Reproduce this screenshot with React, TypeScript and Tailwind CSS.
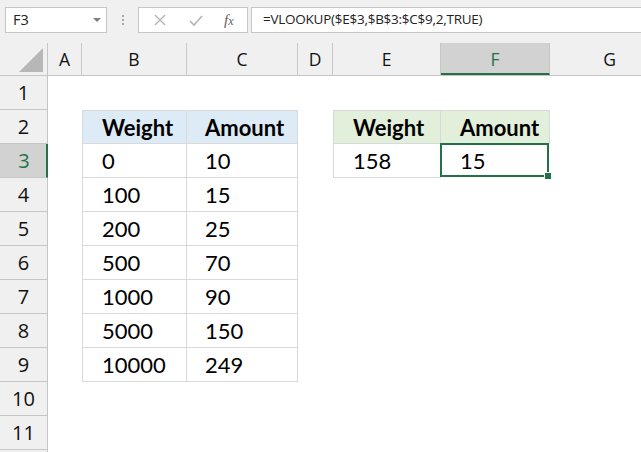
import React from "react";

const cols = [34, 105, 111, 35, 108, 109, 120];
const colLetters = ["A", "B", "C", "D", "E", "F", "G"];

const t1 = [
  ["0", "10"],
  ["100", "15"],
  ["200", "25"],
  ["500", "70"],
  ["1000", "90"],
  ["5000", "150"],
  ["10000", "249"],
];

function Cell({ w, className = "", children }: { w: number; className?: string; children?: React.ReactNode }) {
  return (
    <div className={"h-full shrink-0 flex items-center " + className} style={{ width: w }}>
      {children}
    </div>
  );
}

const lato = { fontFamily: "Lato, sans-serif" };

export default function App() {
  const rows = Array.from({ length: 11 }, (_, i) => i + 1);
  return (
    <div className="w-[641px] h-[452px] overflow-hidden bg-white relative" style={{ fontFamily: "'Open Sans', sans-serif" }}>
      {/* formula bar */}
      <div className="h-[43px] bg-[#f0f0f0] flex items-start pt-[7px] pl-[5px]">
        <div className="w-[102px] h-[26px] bg-white border border-[#c6c6c6] flex items-center justify-between pl-[7px] pr-[5px]">
          <span className="text-[14.5px] text-[#222] leading-none">F3</span>
          <span className="w-0 h-0 border-l-[4px] border-r-[4px] border-t-[4px] border-l-transparent border-r-transparent border-t-[#808080]" />
        </div>
        <div className="w-[31px] h-[26px] flex flex-col items-center justify-center gap-[2px]">
          <span className="w-[2px] h-[2px] bg-[#a8a8a8]" />
          <span className="w-[2px] h-[2px] bg-[#a8a8a8]" />
          <span className="w-[2px] h-[2px] bg-[#a8a8a8]" />
        </div>
        <div className="w-[110px] h-[26px] bg-white border border-[#c6c6c6] flex items-center">
          <svg width="36" height="24" viewBox="0 0 36 24" className="ml-[3px]">
            <path d="M13 7 L23 17 M23 7 L13 17" stroke="#b4b4b4" strokeWidth="1.4" />
          </svg>
          <svg width="36" height="24" viewBox="0 0 36 24">
            <path d="M12 13 L16 17 L24 8" stroke="#b4b4b4" strokeWidth="1.6" fill="none" />
          </svg>
          <span className="ml-[10px] text-[15px] italic text-[#606060] leading-none" style={{ fontFamily: "'Liberation Serif', serif" }}>
            f<span className="text-[12px]">x</span>
          </span>
        </div>
        <div className="ml-[3px] flex-1 h-[26px] bg-white border border-[#c6c6c6] border-r-0 flex items-center pl-[11px]">
          <span className="text-[13.5px] text-[#222] leading-none tracking-[-0.25px]">=VLOOKUP($E$3,$B$3:$C$9,2,TRUE)</span>
        </div>
      </div>

      {/* column header */}
      <div className="h-[33px] bg-[#f0f0f0] flex border-b border-[#c6c6c6]">
        <div className="w-[48px] shrink-0 h-full border-r border-[#c6c6c6] flex items-end justify-end pr-[4px] pb-[3px]">
          <svg width="24" height="24" viewBox="0 0 24 24">
            <path d="M0 24 L24 0 L24 24 Z" fill="#b7b7b7" />
          </svg>
        </div>
        {colLetters.map((l, i) => {
          const sel = l === "F";
          return (
            <div
              key={l}
              className={
                "shrink-0 h-full border-r border-[#c6c6c6] flex items-center justify-center text-[17.5px] " +
                (sel ? "bg-[#d2d2d2] text-[#217346] border-b-2 border-b-[#217346] pt-[2px]" : "text-[#111]")
              }
              style={{ width: cols[i] }}
            >
              {l}
            </div>
          );
        })}
      </div>

      {/* rows */}
      {rows.map((r) => {
        const sel = r === 3;
        return (
          <div key={r} className="h-[34px] flex">
            <div
              className={
                "w-[48px] shrink-0 h-full border-b border-[#c6c6c6] flex items-center justify-center text-[20px] " +
                (sel ? "bg-[#d2d2d2] text-[#217346] border-r-2 border-r-[#217346] pl-[2px]" : "bg-[#f0f0f0] text-[#111] border-r border-[#c6c6c6]")
              }
            >
              {r}
            </div>
            <Cell w={cols[0]} />
            {r >= 2 && r <= 9 ? (
              <>
                <Cell
                  w={cols[1]}
                  className={
                    "border-l border-r border-b border-[#d9d9d9] pl-[19px] text-[22px] text-black " +
                    (r === 2 ? "border-t bg-[#ddebf7] font-bold" : "")
                  }
                >
                  <span style={lato}>{r === 2 ? "Weight" : t1[r - 3][0]}</span>
                </Cell>
                <Cell
                  w={cols[2]}
                  className={
                    "border-r border-b border-[#d9d9d9] pl-[18px] text-[22px] text-black " +
                    (r === 2 ? "border-t bg-[#ddebf7] font-bold" : "")
                  }
                >
                  <span style={lato}>{r === 2 ? "Amount" : t1[r - 3][1]}</span>
                </Cell>
              </>
            ) : (
              <>
                <Cell w={cols[1]} />
                <Cell w={cols[2]} />
              </>
            )}
            <Cell w={cols[3]} />
            {r === 2 || r === 3 ? (
              <>
                <Cell
                  w={cols[4]}
                  className={
                    "border-l border-r border-b border-[#d9d9d9] pl-[19px] text-[22px] text-black " +
                    (r === 2 ? "border-t bg-[#e2efda] font-bold" : "")
                  }
                >
                  <span style={lato}>{r === 2 ? "Weight" : "158"}</span>
                </Cell>
                {r === 2 ? (
                  <Cell w={cols[5]} className="border-r border-b border-t border-[#d9d9d9] pl-[19px] text-[22px] text-black bg-[#e2efda] font-bold">
                    <span style={lato}>Amount</span>
                  </Cell>
                ) : (
                  <Cell w={cols[5]} className="relative border-2 border-[#217346] ml-[-1px] mt-[-1px] h-[35px] pl-[18px] text-[22px] text-black">
                    <span style={lato}>15</span>
                    <span className="absolute right-[-5px] bottom-[-5px] w-[6px] h-[6px] bg-[#217346] border border-white box-content" />
                  </Cell>
                )}
              </>
            ) : (
              <>
                <Cell w={cols[4]} />
                <Cell w={cols[5]} />
              </>
            )}
            <Cell w={cols[6]} />
          </div>
        );
      })}
      <div className="h-[10px] w-[48px] bg-[#f0f0f0] border-r border-[#c6c6c6]" />
    </div>
  );
}
